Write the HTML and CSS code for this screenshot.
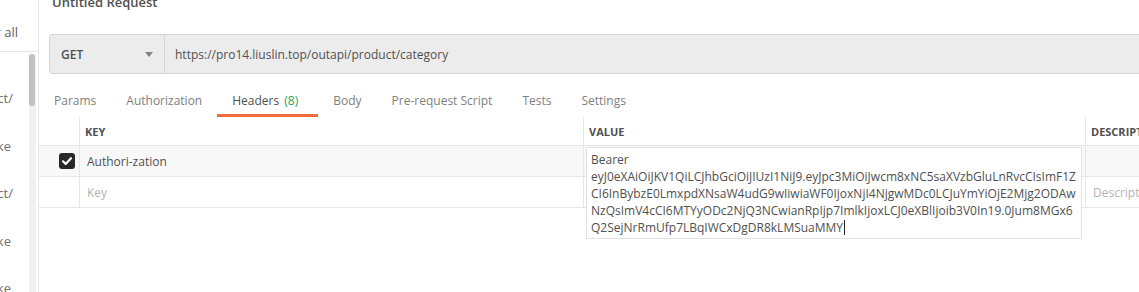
FILE: index.html
```html
<!DOCTYPE html>
<html lang="en">
<head>
<meta charset="utf-8">
<title>Untitled Request</title>
<link rel="stylesheet" href="styles.css">
</head>
<body>
<div class="app">
  <aside class="sidebar">
    <div class="side-top"><div class="clip"><span>Clear all</span></div></div>
    <div class="side-body">
      <div class="side-list">
        <div class="side-item"><span>GET /outapi/product/</span></div>
        <div class="side-item short"><span>make</span></div>
        <div class="side-item"><span>GET /outapi/product/</span></div>
        <div class="side-item short"><span>make</span></div>
        <div class="side-item short"><span>make</span></div>
      </div>
      <div class="scroll-track"><div class="scroll-thumb"></div></div>
    </div>
  </aside>
  <main class="main">
    <div class="title">Untitled Request</div>
    <div class="urlbar">
      <div class="method">
        <span>GET</span>
        <svg class="caret-down" width="8" height="5" viewBox="0 0 8 5"><path d="M0 0h8L4 5z" fill="#808080"/></svg>
      </div>
      <div class="url">https://pro14.liuslin.top/outapi/product/category</div>
    </div>
    <nav class="tabs">
      <div class="tab">Params</div>
      <div class="tab">Authorization</div>
      <div class="tab active">Headers <span class="count">(8)</span></div>
      <div class="tab">Body</div>
      <div class="tab">Pre-request Script</div>
      <div class="tab">Tests</div>
      <div class="tab">Settings</div>
    </nav>
    <div class="table">
      <div class="row head">
        <div class="cell c-check"></div>
        <div class="cell c-key">KEY</div>
        <div class="cell c-val">VALUE</div>
        <div class="cell c-desc">DESCRIPTION</div>
      </div>
      <div class="row filled">
        <div class="cell c-check">
          <span class="checkbox"><svg width="16" height="16" viewBox="0 0 16 16"><path d="M4 8.3l2.7 2.6L12 5.2" fill="none" stroke="#fff" stroke-width="2.2" stroke-linecap="round" stroke-linejoin="round"/></svg></span>
        </div>
        <div class="cell c-key">Authori-zation</div>
        <div class="cell c-val">
          <div class="editor">
            <div class="ln">Bearer</div>
            <div class="ln">eyJ0eXAiOiJKV1QiLCJhbGciOiJIUzI1NiJ9.eyJpc3MiOiJwcm8xNC5saXVzbGluLnRvcCIsImF1Z</div>
            <div class="ln">CI6InBybzE0LmxpdXNsaW4udG9wIiwiaWF0IjoxNjI4NjgwMDc0LCJuYmYiOjE2Mjg2ODAw</div>
            <div class="ln">NzQsImV4cCI6MTYyODc2NjQ3NCwianRpIjp7ImlkIjoxLCJ0eXBlIjoib3V0In19.0Jum8MGx6</div>
            <div class="ln">Q2SejNrRmUfp7LBqIWCxDgDR8kLMSuaMMY<span class="cursor"></span></div>
          </div>
        </div>
        <div class="cell c-desc"></div>
      </div>
      <div class="row">
        <div class="cell c-check"></div>
        <div class="cell c-key placeholder">Key</div>
        <div class="cell c-val"></div>
        <div class="cell c-desc placeholder">Description</div>
      </div>
    </div>
  </main>
</div>
</body>
</html>
```

FILE: styles.css
```css
* { box-sizing: border-box; }
html, body {
  margin: 0;
  padding: 0;
  width: 1139px;
  height: 292px;
  overflow: hidden;
  background: #fff;
  font-family: "Open Sans", "Noto Sans", sans-serif;
  font-size: 12px;
  color: #505050;
}
.app {
  display: flex;
  height: 292px;
  overflow: hidden;
}
.sidebar {
  width: 39px;
  flex: none;
  border-right: 1px solid #e6e6e6;
  display: flex;
  flex-direction: column;
  overflow: hidden;
}
.side-top {
  height: 52px;
  flex: none;
  border-bottom: 1px solid #e6e6e6;
  padding-top: 24px;
}
.clip {
  width: 18px;
  overflow: hidden;
  display: flex;
  justify-content: flex-end;
  white-space: nowrap;
  font-size: 13px;
  line-height: 16px;
  color: #606060;
}
.side-body {
  flex: 1;
  min-height: 0;
  display: flex;
  padding-top: 2px;
  overflow: hidden;
}
.side-list {
  width: 29px;
  flex: none;
  padding-top: 36px;
  overflow: hidden;
}
.side-item {
  width: 13px;
  overflow: hidden;
  display: flex;
  justify-content: flex-end;
  white-space: nowrap;
  font-size: 13px;
  line-height: 16px;
  height: 47.5px;
  color: #707070;
}
.side-item.short { width: 11px; }
.scroll-track {
  width: 7px;
  flex: none;
  background: #f0f0f0;
}
.scroll-thumb {
  width: 6px;
  height: 52px;
  background: #c1c1c1;
  border-radius: 3px;
}
.main {
  flex: 1;
  min-width: 0;
  overflow: hidden;
}
.title {
  height: 42px;
  padding-left: 13px;
  margin-top: -8px;
  font-size: 13px;
  font-weight: 600;
  line-height: 20px;
  color: #505050;
}
.urlbar {
  margin-left: 10px;
  width: 1120px;
  height: 40px;
  display: flex;
  background: #ececec;
  border: 1px solid #d6d6d6;
  border-radius: 3px;
}
.method {
  width: 115px;
  flex: none;
  border-right: 1px solid #d6d6d6;
  display: flex;
  align-items: center;
  justify-content: space-between;
  padding: 0 11px;
  font-weight: 600;
  font-size: 12px;
  color: #505050;
}
.url {
  display: flex;
  align-items: center;
  padding-left: 10px;
  color: #505050;
}
.tabs {
  display: flex;
  margin-top: 19px;
}
.tab {
  padding: 0 15px 5px;
  line-height: 16px;
  border-bottom: 3px solid transparent;
  color: #808080;
  white-space: nowrap;
}
.tab.active {
  color: #505050;
  border-bottom-color: #f26b3a;
  padding-right: 20px;
}
.count { color: #26a65b; margin-left: 2px; }
.table {
  width: 1120px;
}
.row {
  display: flex;
  border-bottom: 1px solid #e6e6e6;
  height: 31px;
}
.row.head { height: 29px; }
.row.filled { background: #f8f8f8; }
.cell {
  display: flex;
  align-items: center;
  white-space: nowrap;
}
.c-check {
  width: 40px;
  flex: none;
  justify-content: flex-end;
  padding-right: 4px;
}
.c-key {
  width: 504px;
  flex: none;
  border-left: 1px solid #e6e6e6;
  padding-left: 7px;
}
.c-val {
  width: 502px;
  flex: none;
  border-left: 1px solid #e6e6e6;
  padding-left: 7px;
  position: relative;
}
.c-desc {
  flex: 1;
  border-left: 1px solid #e6e6e6;
  padding-left: 7px;
  overflow: hidden;
}
.head .cell {
  font-size: 11px;
  font-weight: 700;
  color: #505050;
  padding-left: 5px;
}
.head .c-check { padding-left: 0; }
.placeholder { color: #b3b3b3; }
.checkbox {
  width: 16px;
  height: 16px;
  background: #282828;
  border-radius: 3px;
  display: block;
}
.checkbox svg { display: block; }
.editor {
  position: absolute;
  top: 1px;
  left: 2px;
  width: 496px;
  height: 92px;
  background: #fff;
  border: 1px solid #e2e2e2;
  padding: 3px 0 0 4px;
  line-height: 17px;
  color: #505050;
  z-index: 2;
}
.ln { white-space: nowrap; }
.cursor {
  display: inline-block;
  width: 0;
  height: 15px;
  border-left: 1px solid #222;
  vertical-align: -3px;
  margin-left: 1px;
}
```
